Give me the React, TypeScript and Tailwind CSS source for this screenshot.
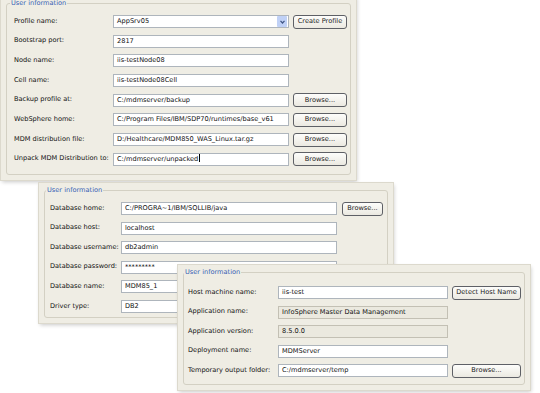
import React from "react";

type Row = {
  label: string;
  value: string;
  kind?: "text" | "select" | "disabled";
  button?: string;
  caret?: boolean;
};

function Field({ row, width }: { row: Row; width: number }) {
  const disabled = row.kind === "disabled";
  return (
    <div
      className={
        "flex h-[13px] shrink-0 items-center overflow-hidden border " +
        (disabled ? "border-[#c3c0b4] bg-[#ebe9df]" : "border-[#aeb5bc] bg-white")
      }
      style={{ width }}
    >
      <span className="flex-1 whitespace-nowrap pl-[3px] leading-[11px] text-[#111]">
        {row.value}
        {row.caret && <span className="ml-[0.5px] inline-block h-[8px] w-[1px] translate-y-[1px] bg-black" />}
      </span>
      {row.kind === "select" && (
        <span className="mr-[1px] flex h-[11px] w-[10px] items-center justify-center rounded-[1px] bg-[#c0d1f6]">
          <svg width="5" height="4" viewBox="0 0 5 4">
            <path d="M0.5 0.8 L2.5 3 L4.5 0.8" fill="none" stroke="#3f5585" strokeWidth="1.2" />
          </svg>
        </span>
      )}
    </div>
  );
}

function Btn({ text, width }: { text: string; width: number }) {
  return (
    <div
      className="flex h-[14px] shrink-0 items-center justify-center rounded-[3px] border border-[#5e6066] bg-gradient-to-b from-[#fdfdfb] to-[#ebe9e1] leading-[11px] text-[#1a1a1a]"
      style={{ width }}
    >
      {text}
    </div>
  );
}

function Panel({
  className,
  rows,
  labelW,
  inputW,
  btnW,
  btnGap,
  rowGap,
  padTop,
  padLeft,
}: {
  className: string;
  rows: Row[];
  labelW: number;
  inputW: number;
  btnW: number;
  btnGap: number;
  rowGap: number;
  padTop: number;
  padLeft: number;
}) {
  return (
    <div
      className={
        "absolute flex flex-col bg-[#efede4] px-[5px] pb-[5px] pt-[2px] shadow-[0_0_0_1px_#dcd9cd,1px_2px_4px_rgba(0,0,0,0.22)] " +
        className
      }
    >
      <fieldset className="flex-1 rounded-[3px] border border-[#d3d0c3]" style={{ paddingLeft: padLeft }}>
        <legend className="-ml-[4px] px-[1px] leading-[10px] text-[#3561b4]">User information</legend>
        <div className="flex flex-col" style={{ paddingTop: padTop, gap: rowGap }}>
          {rows.map((r) => (
            <div key={r.label} className="flex h-[13px] items-center">
              <span className="shrink-0 whitespace-nowrap text-[#111]" style={{ width: labelW }}>
                {r.label}
              </span>
              <Field row={r} width={inputW} />
              {r.button && (
                <div className="shrink-0" style={{ marginLeft: btnGap }}>
                  <Btn text={r.button} width={btnW} />
                </div>
              )}
            </div>
          ))}
        </div>
      </fieldset>
    </div>
  );
}

const rows1: Row[] = [
  { label: "Profile name:", value: "AppSrv05", kind: "select", button: "Create Profile" },
  { label: "Bootstrap port:", value: "2817" },
  { label: "Node name:", value: "iis-testNode08" },
  { label: "Cell name:", value: "iis-testNode08Cell" },
  { label: "Backup profile at:", value: "C:/mdmserver/backup", button: "Browse..." },
  { label: "WebSphere home:", value: "C:/Program Files/IBM/SDP70/runtimes/base_v61", button: "Browse..." },
  { label: "MDM distribution file:", value: "D:/Healthcare/MDM850_WAS_Linux.tar.gz", button: "Browse..." },
  { label: "Unpack MDM Distribution to:", value: "C:/mdmserver/unpacked", button: "Browse...", caret: true },
];

const rows2: Row[] = [
  { label: "Database home:", value: "C:/PROGRA~1/IBM/SQLLIB/java", button: "Browse..." },
  { label: "Database host:", value: "localhost" },
  { label: "Database username:", value: "db2admin" },
  { label: "Database password:", value: "*********" },
  { label: "Database name:", value: "MDM85_1" },
  { label: "Driver type:", value: "DB2" },
];

const rows3: Row[] = [
  { label: "Host machine name:", value: "iis-test", button: "Detect Host Name" },
  { label: "Application name:", value: "InfoSphere Master Data Management", kind: "disabled" },
  { label: "Application version:", value: "8.5.0.0", kind: "disabled" },
  { label: "Deployment name:", value: "MDMServer" },
  { label: "Temporary output folder:", value: "C:/mdmserver/temp", button: "Browse..." },
];

export default function App() {
  return (
    <div className="relative h-[393px] w-[540px] overflow-hidden bg-white font-['DejaVu_Sans',sans-serif] text-[6.6px]">
      <Panel
        className="left-[1px] top-[-4px] h-[184px] w-[355px]"
        rows={rows1}
        labelW={99}
        inputW={176}
        btnW={54}
        btnGap={4}
        rowGap={6.7}
        padTop={7}
        padLeft={7}
      />
      <Panel
        className="left-[39px] top-[183px] h-[140px] w-[354px]"
        rows={rows2}
        labelW={71}
        inputW={216}
        btnW={41}
        btnGap={5}
        rowGap={6.6}
        padTop={7}
        padLeft={5}
      />
      <Panel
        className="left-[178px] top-[265px] h-[125px] w-[352px]"
        rows={rows3}
        labelW={90}
        inputW={170}
        btnW={69}
        btnGap={4}
        rowGap={6.5}
        padTop={9}
        padLeft={4}
      />
    </div>
  );
}
